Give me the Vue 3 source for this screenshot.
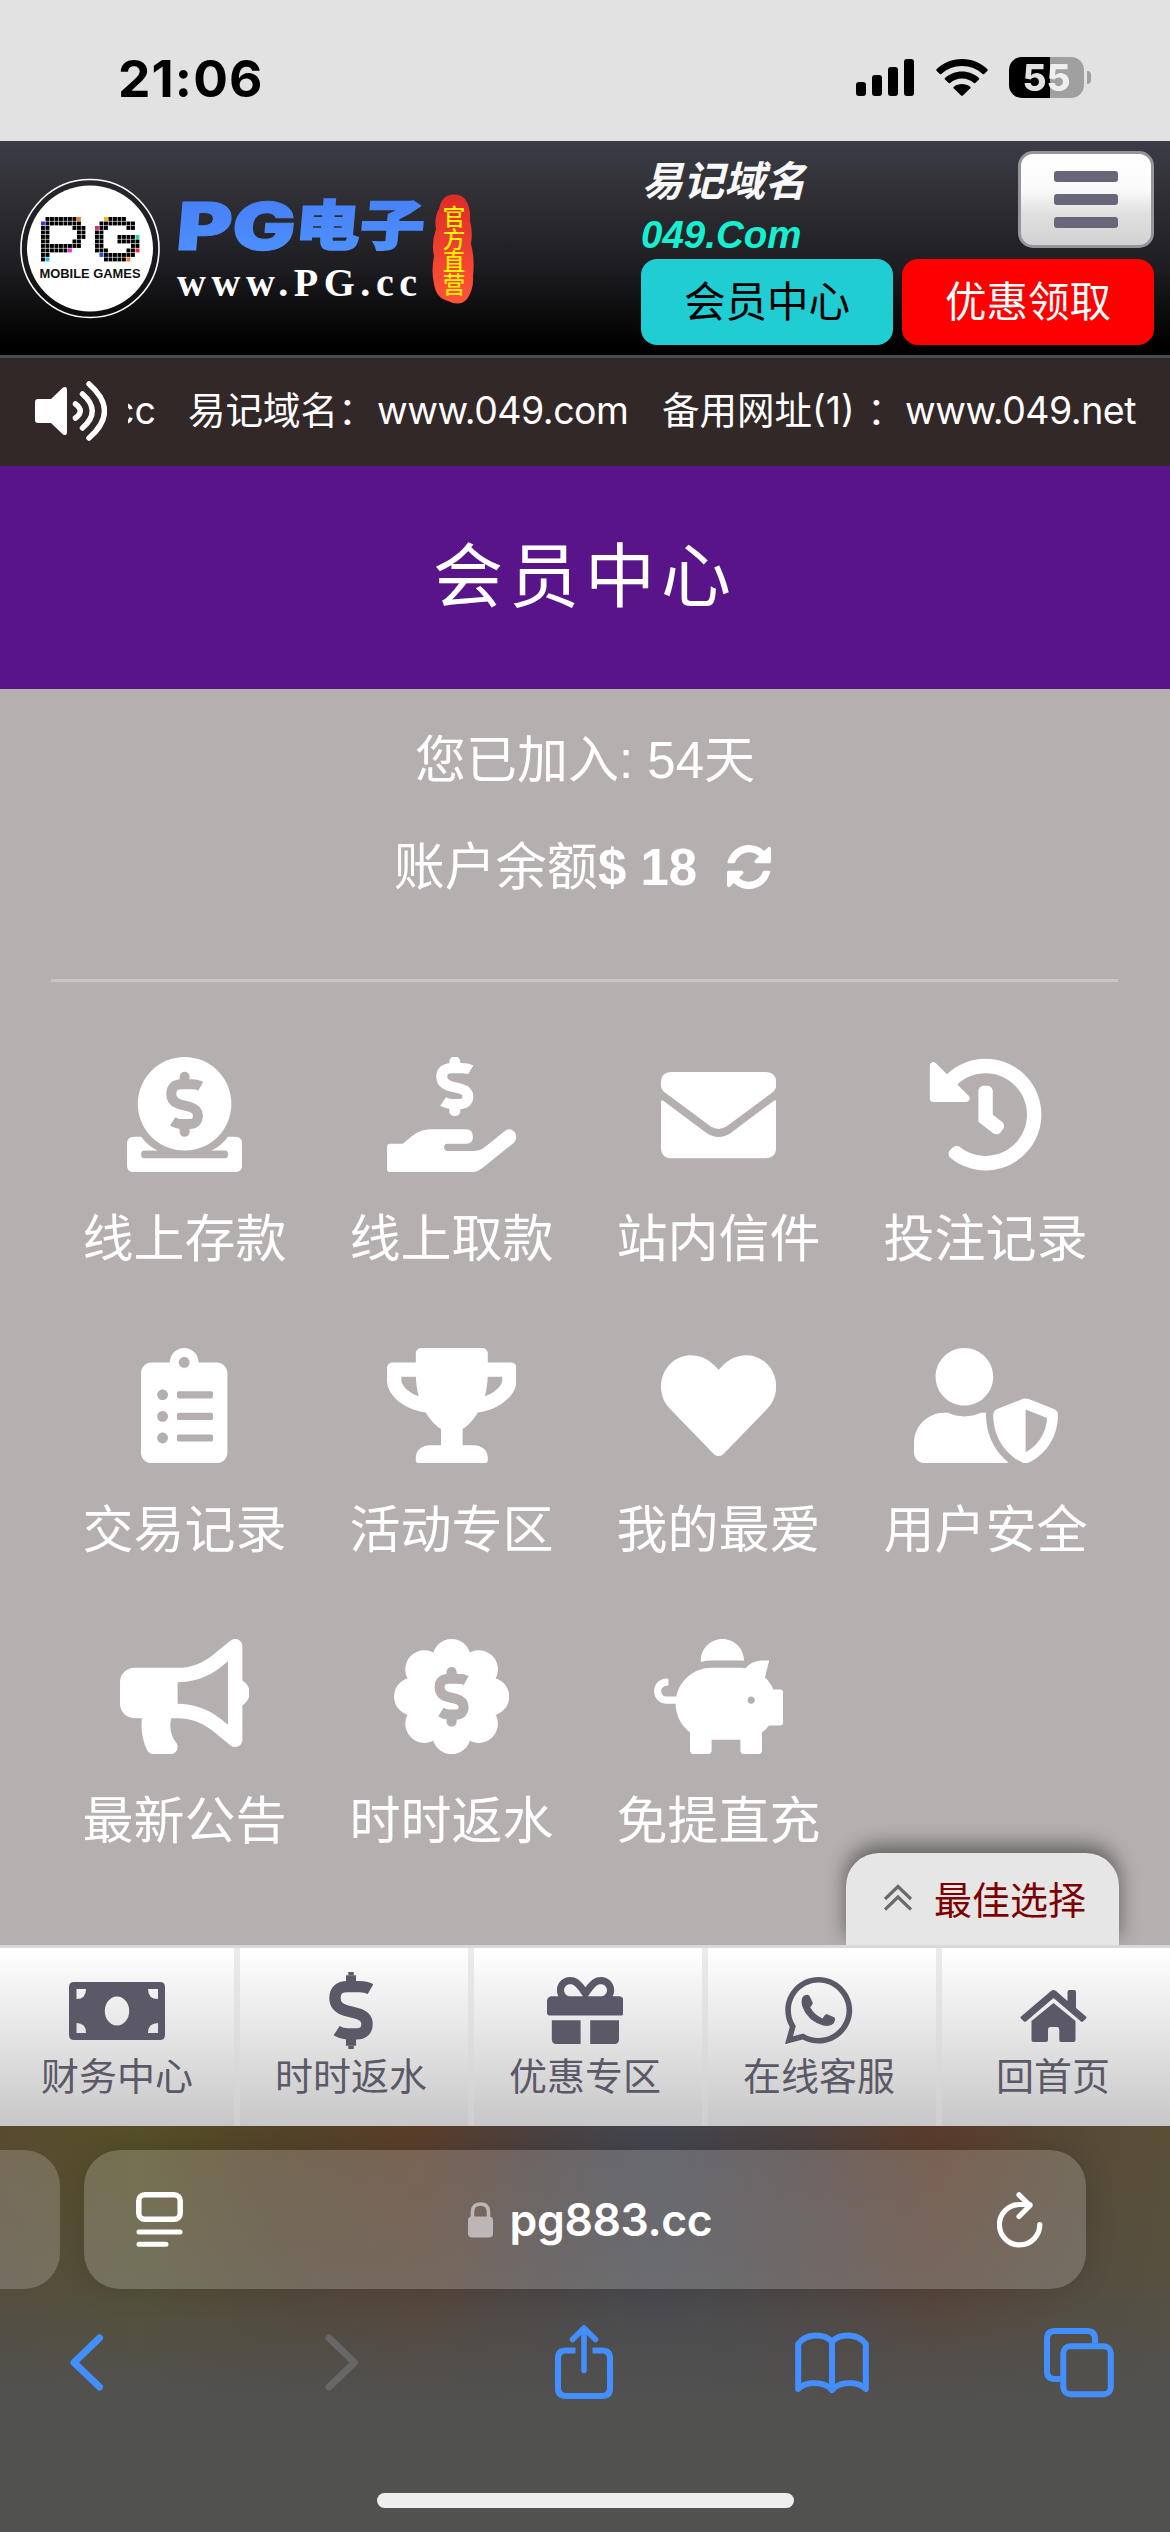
<script setup>
const DOLLAR =
  'M153 64Q137 55 112 55H68Q22 55 22 98C22 126 39 138 63 145L102 155C127 162 140 175 140 194Q140 232 102 232H68Q47 232 28 220'

const menu = [
  {
    label: '线上存款', w: 512,
    paths: ['M256 0A208 208 0 1 1 256 416A208 208 0 1 1 256 0Z', 'M32 354H63C82 380 107 401 137 416H76Q63 416 63 433Q63 450 76 450H436Q449 450 449 433Q449 416 436 416H375C405 401 430 380 449 354H480Q512 354 512 386V480Q512 512 480 512H32Q0 512 0 480V386Q0 354 32 354Z'],
    dollar: { x: 175, y: 66, sx: 1, sy: 1, stroke: 44, cut: true }
  },
  {
    label: '线上取款', w: 576,
    paths: ['M0 401Q0 386 15 386H70L110 352Q148 321 195 321H350Q382 321 382 354Q382 386 350 386H270Q254 386 254 401Q254 418 270 418H390Q412 418 428 406L520 332Q543 312 564 330Q586 354 564 381L424 493Q402 512 372 512H15Q0 512 0 498Z'],
    dollar: { x: 222, y: 0, sx: 0.98, sy: 0.9, stroke: 50 }
  },
  {
    label: '站内信件', w: 512,
    paths: ['M48 67H464Q512 67 512 115V125Q512 145 496 157L292 308Q256 333 220 308L16 157Q0 145 0 125V115Q0 67 48 67Z', 'M0 200Q0 188 10 194L202 338Q256 374 310 338L502 194Q512 188 512 200V402Q512 450 464 450H48Q0 450 0 402Z']
  },
  {
    label: '投注记录', w: 512,
    paths: ['M504 255.531c.253 136.64-111.18 248.372-247.82 248.468-59.015.042-113.223-20.53-155.822-54.911-11.077-8.94-11.905-25.541-1.839-35.607l11.267-11.267c8.609-8.609 22.353-9.551 31.891-1.984C173.062 425.135 212.781 440 256 440c101.705 0 184-82.311 184-184 0-101.705-82.311-184-184-184-48.814 0-93.149 18.969-126.068 49.932l50.754 50.754c10.08 10.08 2.941 27.314-11.313 27.314H24c-8.837 0-16-7.163-16-16V38.627c0-14.254 17.234-21.393 27.314-11.314l49.372 49.372C129.209 34.136 189.552 8 256 8c136.81 0 247.747 110.78 248 247.531zm-180.912 78.784l9.823-12.63c8.138-10.463 6.253-25.542-4.21-33.679L288 256.349V152c0-13.255-10.745-24-24-24h-16c-13.255 0-24 10.745-24 24v135.651l65.409 50.874c10.463 8.137 25.541 6.253 33.679-4.21z']
  },
  {
    label: '交易记录', w: 384,
    paths: ['M336 64h-80c0-35.3-28.7-64-64-64s-64 28.7-64 64H48C21.5 64 0 85.5 0 112v352c0 26.5 21.5 48 48 48h288c26.5 0 48-21.5 48-48V112c0-26.5-21.5-48-48-48zM96 424c-13.3 0-24-10.7-24-24s10.7-24 24-24 24 10.7 24 24-10.7 24-24 24zm0-96c-13.3 0-24-10.7-24-24s10.7-24 24-24 24 10.7 24 24-10.7 24-24 24zm0-96c-13.3 0-24-10.7-24-24s10.7-24 24-24 24 10.7 24 24-10.7 24-24 24zm96-192c13.3 0 24 10.7 24 24s-10.7 24-24 24-24-10.7-24-24 10.7-24 24-24zm128 368c0 4.4-3.6 8-8 8H168c-4.4 0-8-3.6-8-8v-16c0-4.4 3.6-8 8-8h144c4.4 0 8 3.6 8 8v16zm0-96c0 4.4-3.6 8-8 8H168c-4.4 0-8-3.6-8-8v-16c0-4.4 3.6-8 8-8h144c4.4 0 8 3.6 8 8v16zm0-96c0 4.4-3.6 8-8 8H168c-4.4 0-8-3.6-8-8v-16c0-4.4 3.6-8 8-8h144c4.4 0 8 3.6 8 8v16z']
  },
  {
    label: '活动专区', w: 576,
    paths: ['M552 64H448V24c0-13.3-10.7-24-24-24H152c-13.3 0-24 10.7-24 24v40H24C10.7 64 0 74.7 0 88v56c0 35.7 22.5 72.4 61.9 100.7 31.5 22.7 69.8 37.1 110 41.7C203.3 338.5 240 360 240 360v72h-48c-35.3 0-64 20.7-64 56v12c0 6.6 5.4 12 12 12h296c6.6 0 12-5.4 12-12v-12c0-35.3-28.7-56-64-56h-48v-72s36.7-21.5 68.1-73.6c40.3-4.6 78.6-19 110-41.7 39.3-28.3 61.9-65 61.9-100.7V88c0-13.3-10.7-24-24-24zM99.3 192.8C74.9 175.2 64 155.6 64 144v-16h64.2c1 32.6 5.8 61.2 12.8 86.2-15.1-5.2-29.2-12.4-41.7-21.4zM512 144c0 16.1-17.7 36.1-35.3 48.8-12.5 9-26.7 16.2-41.8 21.4 7-25 11.8-53.6 12.8-86.2H512v16z']
  },
  {
    label: '我的最爱', w: 512,
    paths: ['M462.3 62.6C407.5 15.9 326 24.3 275.7 76.2L256 96.5l-19.7-20.3C186.1 24.3 104.5 15.9 49.7 62.6c-62.8 53.6-66.1 149.8-9.9 207.9l193.5 199.8c12.5 12.9 32.8 12.9 45.3 0l193.5-199.8c56.3-58.1 53-154.3-9.8-207.9z']
  },
  {
    label: '用户安全', w: 640,
    paths: ['M622.3 271.1l-115.2-45c-4.1-1.6-12.6-3.7-22.2 0l-115.2 45c-10.7 4.2-17.7 14-17.7 24.9 0 111.6 68.7 188.8 132.9 213.9 9.6 3.7 18 1.6 22.2 0C558.4 489.9 640 420.5 640 296c0-10.9-7-20.7-17.7-24.9zM496 462.4V273.3l95.5 37.3c-5.6 87.1-60.9 135.4-95.5 151.8zM224 256c70.7 0 128-57.3 128-128S294.7 0 224 0 96 57.3 96 128s57.3 128 128 128zm96 40c0-2.5.8-4.8 1.1-7.2-2.5-.1-4.9-.8-7.5-.8h-16.7c-22.2 10.2-46.9 16-72.9 16s-50.6-5.8-72.9-16h-16.7C60.2 288 0 348.2 0 422.4V464c0 26.5 21.5 48 48 48h352c6.8 0 13.3-1.5 19.2-4-54-42.9-99.2-116.7-99.2-212z']
  },
  {
    label: '最新公告', w: 576,
    paths: ['M576 240c0-23.63-12.95-44.04-32-55.12V32.01C544 23.26 537.02 0 512 0c-7.12 0-14.19 2.38-19.98 7.02l-85.03 68.03C364.28 109.19 310.66 128 256 128H64c-35.35 0-64 28.65-64 64v96c0 35.35 28.65 64 64 64h33.7c-1.39 10.48-2.18 21.14-2.18 32 0 39.77 9.26 77.35 25.56 110.94 5.19 10.69 16.52 17.06 28.4 17.06h74.28c26.05 0 41.69-29.84 25.9-50.56-16.4-21.52-26.15-48.36-26.15-77.44 0-11.11 1.62-21.79 4.41-32H256c54.66 0 108.28 18.81 150.98 52.95l85.03 68.03a32.023 32.023 0 0 0 19.98 7.02c24.92 0 32-22.78 32-32V295.13C563.05 284.04 576 263.63 576 240zm-96 141.42l-33.05-26.44C392.95 311.78 325.12 288 256 288v-96c69.12 0 136.95-23.78 190.95-66.98L480 98.58v282.84z']
  },
  {
    label: '时时返水', w: 512,
    scallop: true,
    paths: [],
    dollar: { x: 183, y: 127, sx: 0.9, sy: 0.9, stroke: 50, cut: true }
  },
  {
    label: '免提直充', w: 576,
    paths: ['M560 224h-29.5c-8.8-20-21.6-37.7-37.4-52.5L512 96h-32c-29.4 0-55.4 13.5-73 34.3-7.6-1.1-15.1-2.3-23-2.3H256c-77.4 0-141.9 55-156.8 128H56c-14.8 0-26.5-13.5-23.5-28.8C34.7 215.8 45.4 208 57 208h1c3.3 0 6-2.7 6-6v-20c0-3.3-2.7-6-6-6-28.5 0-53.9 20.4-57.5 48.6C-3.9 258.8 22.7 288 56 288h40c0 52.2 25.4 98.1 64 127.3V496c0 8.8 7.2 16 16 16h64c8.8 0 16-7.2 16-16v-48h128v48c0 8.8 7.2 16 16 16h64c8.8 0 16-7.2 16-16v-80.7c11.8-8.9 22.3-19.4 31.3-31.3H560c8.8 0 16-7.2 16-16V240c0-8.8-7.2-16-16-16zm-128 64c-8.8 0-16-7.2-16-16s7.2-16 16-16 16 7.2 16 16-7.2 16-16 16zM256 96h128c5.4 0 10.7.4 15.9.8 0-.3.1-.5.1-.8 0-53-43-96-96-96s-96 43-96 96c0 2.1.5 4.1.6 6.2 15.2-3.9 31-6.2 47.4-6.2z']
  }
]

const lobes = Array.from({ length: 8 }, (_, i) => {
  const a = (i * Math.PI) / 4
  return { x: 256 + 171 * Math.cos(a), y: 256 + 171 * Math.sin(a) }
})

// Pixel lettering of the emblem: each character is one cell, letters other than # pick an accent.
const bitmap = [
  '.#######o.....y####...',
  'p########....########.',
  '##.....###..m##....##.',
  '##......##..##........',
  '##......##..##...####g',
  '##.....##...##...#####',
  '#########...##......##',
  '######f.....###....##r',
  '##...........b#######.',
  '#c............#####o..'
]
const accents = { '#': '#000', o: '#f57c1f', y: '#f3b21e', p: '#5c1df0', m: '#e0247c', g: '#1fe08a', f: '#e430d8', r: '#f22735', b: '#1c56c4', c: '#22b8ea' }
const cells = bitmap.flatMap((row, y) =>
  [...row].map((ch, x) => ({ ch, x, y })).filter((c) => c.ch !== '.')
)

const tabs = ['财务中心', '时时返水', '优惠专区', '在线客服', '回首页']
</script>

<template>
  <div class="screen">
    <div class="status">
      <span class="time">21:06</span>
      <svg class="signal" width="58" height="37" viewBox="0 0 58 37">
        <rect x="0" y="23" width="10" height="14" rx="3" /><rect x="16" y="16" width="10" height="21" rx="3" />
        <rect x="32" y="8" width="10" height="29" rx="3" /><rect x="48" y="0" width="10" height="37" rx="3" />
      </svg>
      <svg class="wifi" width="52" height="37" viewBox="0 0 52 37">
        <path d="M26 0C36 0 45 4 51.500 10.300Q52 11 51.500 11.700L48.200 15Q47.500 15.600 46.700 15C41 9.700 34 7 26 7S11 9.700 5.300 15Q4.500 15.600 3.800 15L.5 11.700Q0 11 .5 10.300C7 4 16 0 26 0Z" />
        <path d="M26 12.500C32.500 12.500 38.500 15 43 19Q43.700 19.700 43 20.400L39.300 24Q38.600 24.600 37.900 24C34.500 21.200 30.500 19.600 26 19.600S17.500 21.200 14.100 24Q13.400 24.600 12.700 24L9 20.400Q8.300 19.700 9 19C13.500 15 19.500 12.500 26 12.500Z" />
        <path d="M26 25C29 25 32 26 34.200 27.800Q35 28.500 34.300 29.300L26.900 36.500Q26 37.200 25.100 36.500L17.700 29.300Q17 28.500 17.800 27.800C20 26 23 25 26 25Z" />
      </svg>
      <div class="battery"><span>55</span></div>
      <i class="tip"></i>
    </div>

    <header class="head">
      <svg class="logo" width="480" height="214" viewBox="0 0 480 214">
        <defs>
          <linearGradient id="blue" x1="0" y1="0" x2="0" y2="1"><stop offset="0" stop-color="#457cf5" /><stop offset="1" stop-color="#4f93ff" /></linearGradient>
          <linearGradient id="seal" x1="0" y1="0" x2="0" y2="1"><stop offset="0" stop-color="#de2c26" /><stop offset="1" stop-color="#ff5438" /></linearGradient>
        </defs>
        <circle cx="90" cy="107.500" r="69" fill="#101014" fill-opacity=".35" stroke="#fff" stroke-width="1.600" />
        <circle cx="90" cy="107.500" r="63" fill="#fff" />
        <g transform="translate(41 76)">
          <rect v-for="(c, i) in cells" :key="i" :x="c.x * 4.5" :y="c.y * 4.5" width="3.900" height="3.900" :fill="accents[c.ch]" />
        </g>
        <text x="39.500" y="136.700" class="emblem" textLength="101" lengthAdjust="spacingAndGlyphs">MOBILE GAMES</text>
        <g fill="url(#blue)" stroke="url(#blue)">
          <text class="brand" stroke-width="1" transform="translate(175 108.500) skewX(-5)" textLength="119" lengthAdjust="spacingAndGlyphs">PG</text>
          <text class="brand cjk" stroke-width="2" transform="translate(294 104) skewX(-5)" textLength="129" lengthAdjust="spacingAndGlyphs">电子</text>
        </g>
        <text x="177" y="154.500" class="site" textLength="240">www.PG.cc</text>
        <path d="M447 55Q458 51 465 58Q471 66 470 80Q473 90 471 103Q475 118 473 135Q474 148 467 158Q460 166 448 160Q436 157 434 143Q431 130 434 115Q431 102 436 88Q434 76 439 68Q441 58 447 55Z" fill="url(#seal)" />
        <g class="sealtext">
          <text x="454" y="83.500">官</text><text x="454" y="106.500">方</text><text x="454" y="129">直</text><text x="454" y="151.500">营</text>
        </g>
      </svg>
      <div class="actions">
        <div class="top">
          <div class="domain"><b>易记域名</b><em>049.Com</em></div>
          <div class="burger"><i></i><i></i><i></i></div>
        </div>
        <div class="btns"><span class="member">会员中心</span><span class="promo">优惠领取</span></div>
      </div>
    </header>

    <div class="notice">
      <svg width="72" height="60" viewBox="0 0 72 60">
        <path d="M3 18H16L28 6.500Q32 4.500 32 9V51Q32 55.500 28 53.500L16 42H3Q0 42 0 39V21Q0 18 3 18Z" fill="#fff" />
        <g fill="none" stroke="#fff" stroke-width="5.500" stroke-linecap="round">
          <path d="M40.500 23Q50 30 40.500 37" /><path d="M47.500 13Q67 30 47.500 47" /><path d="M54 3Q85 30 54 57" />
        </g>
      </svg>
      <div class="ticker">
        <span class="cc">cc</span><span class="n1">易记域名：</span><span class="n2">www.049.com</span><span class="n3">备用网址(1)</span><span class="n4">：</span><span class="n5">www.049.net</span>
      </div>
    </div>

    <h1 class="title">会员中心</h1>

    <main class="panel">
      <p class="joined">您已加入: 54天</p>
      <p class="balance">账户余额<b>$ 18</b>
        <svg width="44" height="44" viewBox="0 0 1536 1536"><path d="M1511 928q0 5-1 7-64 268-268 434.500t-478 166.500q-146 0-282.500-55t-243.500-157l-129 129q-19 19-45 19t-45-19-19-45v-448q0-26 19-45t45-19h448q26 0 45 19t19 45-19 45l-137 137q71 66 161 102t187 36q134 0 250-65t186-179q11-17 53-117 8-23 30-23h192q13 0 22.500 9.500t9.500 22.500zm25-800v448q0 26-19 45t-45 19h-448q-26 0-45-19t-19-45 19-45l138-138q-148-137-349-137-134 0-250 65t-186 179q-11 17-53 117-8 23-30 23h-199q-13 0-22.500-9.500t-9.500-22.500v-7q65-268 270-434.500t480-166.500q146 0 284 55.500t245 156.500l130-129q19-19 45-19t45 19 19 45z" fill="#fff" /></svg>
      </p>
      <hr />
      <div class="grid">
        <div v-for="m in menu" :key="m.label" class="cell">
          <svg :width="m.w * 0.225" height="115.2" :viewBox="`0 0 ${m.w} 512`" fill="#fff">
            <path v-for="p in m.paths" :key="p" :d="p" fill-rule="evenodd" />
            <template v-if="m.scallop">
              <circle cx="256" cy="256" r="195" />
              <circle v-for="(l, i) in lobes" :key="i" :cx="l.x" :cy="l.y" r="85" />
            </template>
            <g v-if="m.dollar" :transform="`translate(${m.dollar.x} ${m.dollar.y}) scale(${m.dollar.sx} ${m.dollar.sy})`" fill="none" :stroke="m.dollar.cut ? '#b5afaf' : '#fff'" :stroke-width="m.dollar.stroke">
              <path :d="DOLLAR" />
              <path d="M81 22V50M81 240V267" stroke-linecap="round" />
            </g>
          </svg>
          <span>{{ m.label }}</span>
        </div>
      </div>
      <div class="best">
        <svg width="28" height="27" viewBox="0 0 28 27" fill="none" stroke="#6b6b6b" stroke-width="3.200"><path d="M1 15L14 2.500L27 15M1 25.500L14 13L27 25.500" /></svg>
        <span>最佳选择</span>
      </div>
    </main>

    <nav class="nav">
      <div v-for="(t, i) in tabs" :key="t" class="tab">
        <div class="ic">
          <svg v-if="i === 0" width="96" height="58" viewBox="0 0 96 58"><path fill-rule="evenodd" d="M5 0H91Q96 0 96 5V53Q96 58 91 58H5Q0 58 0 53V5Q0 0 5 0ZM7.500 7V17Q17 17 17 7ZM79 7Q79 17 89 17V7ZM7.500 51H17Q17 41 7.500 41ZM79 51H89V41Q79 41 79 51ZM48 14.500A12.200 14.500 0 1 0 48 43.500A12.200 14.500 0 1 0 48 14.500Z" /></svg>
          <svg v-else-if="i === 1" width="44" height="77" viewBox="0 0 162 289" preserveAspectRatio="none" fill="none" stroke="#5b5968" stroke-width="42"><path :d="DOLLAR" /><path d="M81 12V50M81 240V277" stroke-width="37" /><path d="M71 6H91M71 283H91" stroke-width="12" stroke-linejoin="round" /></svg>
          <svg v-else-if="i === 2" width="76.8" height="67.2" viewBox="0 32 512 448"><path d="M32 448c0 17.7 14.3 32 32 32h160V320H32v128zm256 32h160c17.7 0 32-14.3 32-32V320H288v160zm192-320h-42.1c6.2-12.1 10.1-25.5 10.1-40 0-48.5-39.5-88-88-88-41.6 0-68.5 21.3-103 68.3-34.5-47-61.4-68.3-103-68.3-48.5 0-88 39.5-88 88 0 14.5 3.8 27.9 10.1 40H32c-17.7 0-32 14.3-32 32v80c0 8.8 7.2 16 16 16h480c8.8 0 16-7.2 16-16v-80c0-17.7-14.3-32-32-32zm-326.1 0c-22.1 0-40-17.9-40-40s17.9-40 40-40c19.9 0 34.6 3.3 86.1 80h-86.1zm206.1 0h-86.1c51.4-76.5 65.7-80 86.1-80 22.1 0 40 17.9 40 40s-17.9 40-40 40z" /></svg>
          <svg v-else-if="i === 3" width="67.2" height="67.2" viewBox="0 32 448 448"><path d="M380.9 97.1C339 55.1 283.2 32 223.9 32c-122.4 0-222 99.6-222 222 0 39.1 10.2 77.3 29.6 111L0 480l117.7-30.9c32.4 17.7 68.9 27 106.1 27h.1c122.3 0 224.1-99.6 224.1-222 0-59.3-25.2-115-67.1-157zm-157 341.6c-33.2 0-65.7-8.9-94-25.7l-6.7-4-69.800 18.300L72 359.200l-4.400-7c-18.500-29.400-28.200-63.300-28.200-98.200 0-101.700 82.800-184.500 184.600-184.500 49.300 0 95.600 19.200 130.400 54.100 34.800 34.900 56.200 81.200 56.100 130.500 0 101.800-84.900 184.600-186.600 184.600z" /><path d="M115 170Q125 150 150 150Q160 151 165 162L184 200Q188 210 180 219L168 234Q195 285 250 308L266 286Q274 277 286 282L327 300Q336 305 334 317Q332 340 312 351Q290 363 255 355Q150 325 116 230Q106 194 115 170Z" /></svg>
          <svg v-else class="home" width="67" height="52" viewBox="0 0 67 52"><path d="M31 1Q33.500 -1 36 1L47.500 11V2Q47.500 0 49.500 0H54Q56 0 56 2V18L66 26.500Q67 27.500 66 28.500L63 31.500Q62 32 61 31.500L33.500 8L6 31.500Q5 32 4 31.500L1 28.500Q0 27.500 1 26.500Z" /><path d="M33.500 13L55.500 31V50Q55.500 52 53.500 52H41.300Q39.300 52 39.300 50V40Q39.300 37 37 37H30.500Q28 37 28 40V50Q28 52 26 52H13.500Q11.500 52 11.500 50V31Z" /></svg>
        </div>
        <span>{{ t }}</span>
      </div>
    </nav>

    <footer class="browser">
      <div class="address">
        <div class="prev"></div>
        <div class="bar">
          <svg width="47" height="55" viewBox="0 0 47 55" fill="none" stroke="#fff" stroke-width="5.500" stroke-linecap="round"><rect x="2.800" y="2.800" width="41.400" height="24.400" rx="6" /><path d="M3 40H44M3 52.200H30" stroke-width="5" /></svg>
          <div class="url">
            <svg width="25" height="36" viewBox="0 0 25 36"><rect x="0" y="14.500" width="25" height="21" rx="4" fill="#bdb6b6" /><path d="M4.500 17V10Q4.500 2 12.500 2T20.500 10V17" fill="none" stroke="#bdb6b6" stroke-width="3.600" /></svg>
            <span>pg883.cc</span>
          </div>
          <svg width="46" height="56" viewBox="0 0 46 56" fill="none" stroke="#fff" stroke-width="5.200" stroke-linecap="round" stroke-linejoin="round"><path d="M42.800 32.500A20.200 20.200 0 1 1 22.500 12.500H33M22 2.800L33 13.500L22 24.500" /></svg>
        </div>
      </div>
      <div class="tools">
        <svg width="34" height="57" viewBox="0 0 34 57" fill="none" stroke="#448fff" stroke-width="7" stroke-linecap="round" stroke-linejoin="round"><path d="M29.500 4L4 28.500L29.500 53" /></svg>
        <svg class="t2" width="34" height="57" viewBox="0 0 34 57" fill="none" stroke="#686767" stroke-width="7" stroke-linecap="round" stroke-linejoin="round"><path d="M4 4L29.500 28.500L4 53" /></svg>
        <svg class="t3" width="58" height="75" viewBox="0 0 58 75" fill="none" stroke="#448fff" stroke-width="6"><path d="M20.500 25.500H11Q3 25.500 3 33.500V63Q3 71 11 71H47Q55 71 55 63V33.500Q55 25.500 47 25.500H37.500" /><path d="M29 4V45.500M17.500 14.500L29 3L40.500 14.500" stroke-width="5.500" stroke-linecap="round" stroke-linejoin="round" /></svg>
        <svg class="t4" width="74" height="62" viewBox="0 0 74 62" fill="none" stroke="#448fff" stroke-width="6" stroke-linejoin="round" stroke-linecap="round"><path d="M37 9.500C29 1 11 1 3.200 12V57C11 49 29 49 37 58C45 49 63 49 70.800 57V12C63 1 45 1 37 9.500V56" /></svg>
        <svg class="t5" width="70" height="70" viewBox="0 0 70 70" fill="none" stroke="#448fff" stroke-width="6"><rect x="19.300" y="18.300" width="47.500" height="48" rx="7" /><path d="M16.500 51H11Q3 51 3 43V11Q3 3 11 3H43Q51 3 51 11V15.500" /></svg>
      </div>
      <div class="indicator"></div>
    </footer>
  </div>
</template>

<style>
body { margin: 0; }
</style>

<style scoped>
.screen { width: 1170px; height: 2532px; display: flex; flex-direction: column; overflow: hidden; font-family: "Liberation Sans", "Noto Sans CJK SC", sans-serif; background: #b5afaf; }
svg { display: block; flex: none; }
.status { height: 141px; flex: none; background: #e2e2e2; display: flex; align-items: flex-start; box-sizing: border-box; padding: 57px 0 0 118px; }
.time { font: 700 51.5px/43px Inter, sans-serif; letter-spacing: 1.1px; width: 738px; }
.signal, .wifi { margin-top: 2px; }
.wifi { margin-left: 22px; }
.battery { margin-left: 21px; width: 75px; height: 41px; border-radius: 13px; background: linear-gradient(90deg, #000 41px, #a0a0a0 41px); text-align: center; }
.battery span { font: 800 37px/42px Inter, sans-serif; background: linear-gradient(90deg, #e2e2e2 23px, #efefef 23px); -webkit-background-clip: text; background-clip: text; color: transparent; }
.tip { width: 4px; height: 13px; margin: 14px 0 0 3px; border-radius: 0 4px 4px 0; background: #a0a0a0; }
.head { height: 214px; flex: none; border-bottom: 3px solid #4b4b55; background: linear-gradient(#3c3c48, #323238 20%, #1c1c21 60%, #0c0c0d 80%, #000 96%); display: flex; }
.emblem { font: 700 13px "Liberation Sans", sans-serif; fill: #111; }
.brand { font: 900 66px Inter, sans-serif; }
.brand.cjk { font: 900 54px "Noto Sans CJK SC", sans-serif; }
.site { font: 700 40px "Liberation Serif", serif; fill: #fff; }
.sealtext { font: 500 22.5px "Noto Sans CJK SC", sans-serif; fill: #fff200; text-anchor: middle; }
.actions { margin-left: 161px; width: 513px; }
.top { display: flex; justify-content: space-between; height: 108px; padding-top: 10px; }
.domain { display: flex; flex-direction: column; font-style: italic; }
.domain b { font-size: 41px; line-height: 42px; margin: 10px 0 0 1px; color: #f8f8f8; }
.domain em { font-size: 38.5px; line-height: 40px; margin-top: 12px; font-weight: 700; color: #15f0d2; }
.burger { width: 130px; height: 91px; border: 3px solid #95959d; border-radius: 15px; background: linear-gradient(#fff, #fafafa 40%, #e0e0df 65%, #d2d2d3); display: flex; flex-direction: column; align-items: center; gap: 12px; justify-content: center; }
.burger i { width: 64px; height: 11px; border-radius: 3px; background: #676779; }
.btns { display: flex; gap: 9px; }
.btns span { width: 252px; height: 86px; border-radius: 16px; font-size: 41.5px; line-height: 88px; text-align: center; }
.member { background: #1fcdd3; color: #000; }
.promo { background: #f00; color: #fff; }
.notice { height: 108px; flex: none; background: #322828; display: flex; align-items: center; box-sizing: border-box; padding: 0 0 3px 35px; }
.ticker { margin-left: 21px; width: 1020px; overflow: hidden; display: flex; white-space: nowrap; color: #fff; font: 400 37.5px/60px Inter, "Noto Sans CJK SC", sans-serif; }
.cc { margin-left: -15px; width: 75px; }
.n1 { width: 189px; }
.n2 { width: 285px; letter-spacing: -.5px; }
.n3 { width: 205px; }
.n4 { width: 38px; }
.n5 { letter-spacing: -.5px; }
.title { margin: 0; height: 223px; flex: none; background: #5a148a; color: #fff; font-weight: 400; font-size: 70px; line-height: 224px; letter-spacing: 6px; text-align: center; }
.panel { height: 1256px; flex: none; background: #b5afaf; color: #fff; font-size: 51px; position: relative; }
.panel p { margin: 0; text-align: center; line-height: 60px; height: 60px; }
.joined { padding-top: 42px; }
.panel .balance { padding-top: 47px; display: flex; justify-content: center; align-items: center; }
.balance svg { margin: -2px 5px 0 30px; }
hr { border: 0; height: 3px; background: #c9c5c5; margin: 81px 52px 0 51px; }
.grid { margin: 75px 51px 0 51px; display: grid; grid-template-columns: repeat(4, 1fr); grid-auto-rows: 291px; }
.cell { display: flex; flex-direction: column; align-items: center; }
.cell span { margin-top: 38px; line-height: 60px; white-space: nowrap; }
.best { position: absolute; right: 51px; bottom: 0; width: 273px; height: 92px; box-sizing: border-box; padding: 0 33px 4px 38px; display: flex; align-items: center; justify-content: space-between; border-radius: 33px 33px 0 0; background: #e6e6e6; box-shadow: 0 -8px 20px rgba(0, 0, 0, .45); clip-path: inset(-40px -40px 0 -40px); color: #7d0000; font-size: 38px; }
.nav { height: 178px; flex: none; border-top: 3px solid #d9d9d9; display: flex; background: linear-gradient(#fff, #e4e4e4 50%, #c7c7c9); color: #5b5968; fill: #5b5968; font-size: 38px; }
.tab { width: 234px; display: flex; flex-direction: column; align-items: center; }
.tab + .tab { background: linear-gradient(90deg, rgba(215, 215, 215, .5) 6px, transparent 6px); }
.ic { height: 125px; margin-bottom: -18px; display: flex; align-items: center; }
.tab .home { margin-top: 10px; }
.tab span { line-height: 44px; }
.browser { height: 406px; flex: none; background: linear-gradient(180deg, rgba(81, 81, 80, 0) 0, rgba(81, 81, 80, .35) 35%, rgba(81, 81, 80, 1) 68%), linear-gradient(90deg, #584a30, #565026 12%, #544328 24%, #5b3e2a 36%, #4b4140 46%, #43454f 56%, #4b4140 68%, #5c3c2a 80%, #564a35 92%, #5a5036); }
.address { display: flex; gap: 24px; padding-top: 24px; }
.prev { width: 60px; height: 139px; border-radius: 0 36px 36px 0; background: rgba(255, 255, 255, .19); }
.bar { width: 1002px; height: 139px; box-sizing: border-box; padding: 0 43px 0 52px; border-radius: 36px; background: rgba(255, 255, 255, .19); box-shadow: 0 0 30px rgba(0, 0, 0, .13); display: flex; align-items: center; justify-content: space-between; }
.url { display: flex; align-items: center; gap: 17px; color: #fff; font: 600 44.5px/60px Inter, sans-serif; letter-spacing: -.4px; }
.tools { display: flex; align-items: center; height: 75px; margin-top: 36px; padding-left: 70px; }
.t2 { margin-left: 221px; } .t3 { margin-left: 196px; } .t4 { margin-left: 182px; } .t5 { margin-left: 175px; }
.indicator { width: 417px; height: 15px; border-radius: 8px; background: #eee; margin: 93px auto 0; }
</style>
